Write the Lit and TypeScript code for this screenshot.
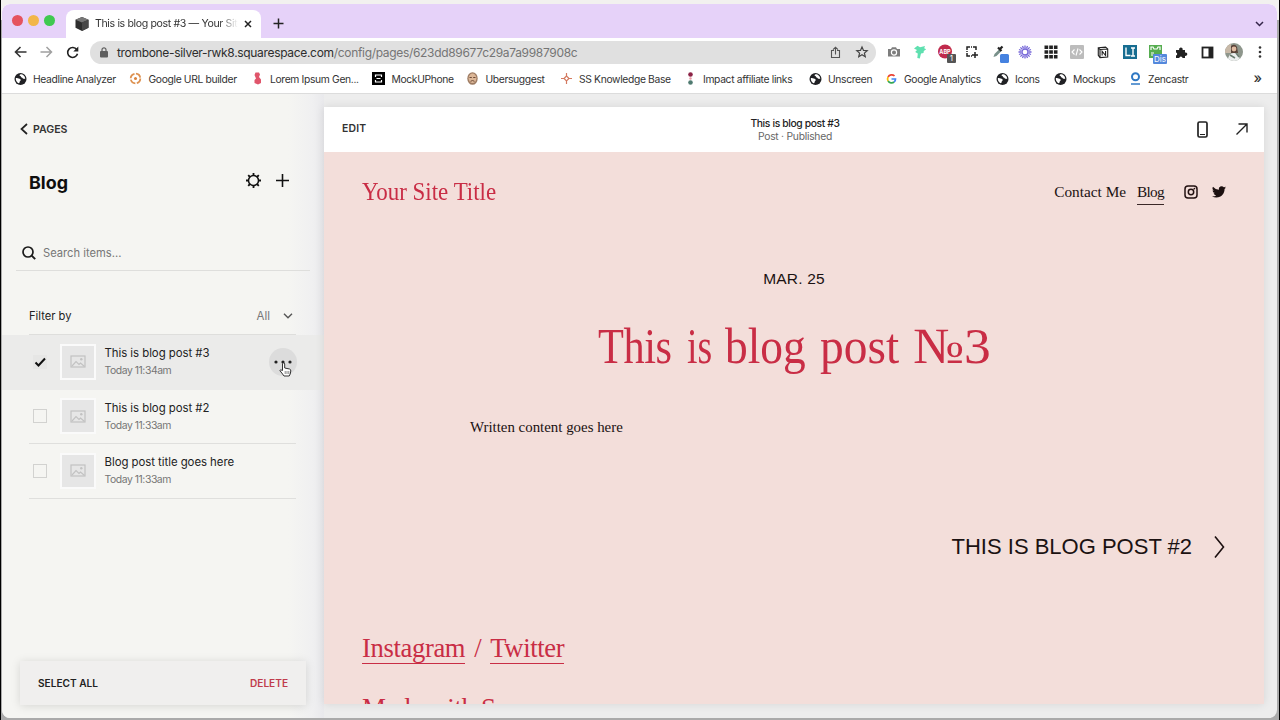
import { LitElement, html, css, svg } from "lit";
import { customElement } from "lit/decorators.js";

const icon = (w: number, h: number, vb: string, body: unknown) =>
  html`<svg width=${w} height=${h} viewBox=${vb} fill="none" stroke-linecap="butt">${body}</svg>`;

const globe = () => icon(12, 12, "0 0 12 12", svg`<circle cx="6" cy="6" r="6" fill="#202124"/><path d="M1.3 5.200C2.500 4.600 3.300 5.200 4.200 5.600c1.200.5 2 .5 2 1.500 0 .9-1 .9-1 1.700 0 .7-.4 1.400-1 1.500C2.300 9.500 1.200 7.500 1.300 5.200z M6 1.300c-1.200.4-1.200 1.500-.2 1.700.9.2.4 1.300 1.400 1.500.9.2.9.9 1.600 1.200.7.200 1.300 0 1.900.3C10.700 3.400 8.700 1.300 6 1.300z" fill="#fff"/>`);
const chevron = (w: number, h: number, d: string, color: string, sw = 1.6) =>
  icon(w, h, `0 0 ${w} ${h}`, svg`<path d=${d} stroke=${color} stroke-width=${sw}/>`);

const bookmarks = [
  { t: "Headline Analyzer", i: globe() },
  { t: "Google URL builder", i: icon(13, 13, "0 0 13 13", svg`<circle cx="6.500" cy="6.500" r="4.800" stroke="#dd9150" stroke-width="1.800" stroke-dasharray="6 1.500"/><circle cx="6.500" cy="6.500" r="1.500" fill="#d9813c"/>`) },
  { t: "Lorem Ipsum Gen...", i: icon(13, 13, "0 0 13 13", svg`<path d="M4.500.5h3.500l1 2-1 2.500 2 2.500v3.500l-3 1.500-3.500-1.500V8l1.500-1.500L3.500 3z" fill="#e0556b"/>`) },
  { t: "MockUPhone", i: icon(13, 13, "0 0 13 13", svg`<path d="M0 0h13v13H0z" fill="#000"/><path d="M3.500 5V3h6v2M3.500 8v2h6V8M4.500 6.500h4" stroke="#fff" stroke-width="1.200"/>`) },
  { t: "Ubersuggest", i: icon(13, 13, "0 0 13 13", svg`<ellipse cx="6.500" cy="6.500" rx="5.200" ry="6.300" fill="#9d7b62"/><ellipse cx="6.500" cy="6.300" rx="3.900" ry="4.800" fill="#dcb798"/><path d="M3.500 5.500h2.300M7.200 5.500h2.300M4.500 9.300q2-1.500 4 0" stroke="#6d4a36"/>`) },
  { t: "SS Knowledge Base", i: icon(13, 13, "0 0 13 13", svg`<path d="M6.500 1v3L9 6.500 6.500 9 4 6.500 6.500 4M6.500 9v3M1 6.500h3M9 6.500h3" stroke="#d47a60" stroke-width="1.200"/>`) },
  { t: "Impact affiliate links", i: icon(13, 13, "0 0 13 13", svg`<circle cx="6.500" cy="2.500" r="2.300" fill="#8c2346"/><circle cx="6.500" cy="6.500" r="1.200" fill="#e89aa5"/><circle cx="6.500" cy="10.500" r="2.300" fill="#4f7a70"/>`) },
  { t: "Unscreen", i: globe() },
  { t: "Google Analytics", i: icon(12, 12, "0 0 12 12", svg`<path d="M9 3A4 4 0 0 0 2.600 4" stroke="#ea4335" stroke-width="1.700"/><path d="M2.600 4a4 4 0 0 0 0 4" stroke="#fbbc05" stroke-width="1.700"/><path d="M2.600 8A4 4 0 0 0 8.600 9" stroke="#34a853" stroke-width="1.700"/><path d="M8.600 9A3.600 3.600 0 0 0 10 6H6" stroke="#4285f4" stroke-width="1.700"/>`) },
  { t: "Icons", i: globe() },
  { t: "Mockups", i: globe() },
  { t: "Zencastr", i: icon(13, 13, "0 0 13 13", svg`<circle cx="6.500" cy="4.800" r="3.500" stroke="#2f78c4" stroke-width="2"/><path d="M2 12h9" stroke="#2f78c4" stroke-width="1.600"/>`) },
];

const extensions = [
  icon(14, 14, "0 0 14 14", svg`<path d="M1 4h3l1-1.700h4L10 4h3v7.500H1z" fill="#7d7d7d"/><circle cx="7" cy="7.500" r="2.600" stroke="#fff" stroke-width="1.200"/>`),
  icon(14, 14, "0 0 14 14", svg`<path d="M1 3.500 4.500.8 7 2.300 12 1l-.8 2.200 2 1-2.400 1.800-.3 2-2.500.5L6.800 13.500 4.300 13 4.800 8.500 2.200 7 4 5z" fill="#5fe0b0"/>`),
  icon(18, 18, "0 0 18 18", svg`<circle cx="8" cy="8.500" r="7" fill="#c02a4c"/><text x="8" y="10.700" font-size="5.500" font-weight="700" text-anchor="middle" fill="#fff">ABP</text><rect x="10" y="11" width="9" height="9" rx="1" fill="#555"/><text x="14.500" y="18.300" font-size="8" text-anchor="middle" fill="#fff">1</text>`),
  icon(12, 12, "0 0 12 12", svg`<path d="M1 4V1h3M7 1h3v3M1 7v3h3M1 5v1M5 1h1M5 10h1M9 6v6M6 9h6" stroke="#222" stroke-width="1.500"/>`),
  icon(18, 18, "0 0 18 18", svg`<path d="m4.500 14 1-3L10 6.500l2 2L7.500 13z" fill="#78908a"/><path d="m9 4.500 3.500 3.500M10.500 6.500 13.500 3.500" stroke="#222" stroke-width="2.200"/><rect x="11" y="11" width="9" height="9" rx="1.500" fill="#4582e0"/>`),
  icon(14, 14, "0 0 14 14", svg`<g stroke="#7566d8" stroke-width="1.300"><circle cx="7" cy="7" r="3"/><path d="M7 .5v3M7 10.500v3M.5 7h3M10.500 7h3M2.400 2.400l2 2M9.600 9.600l2 2M2.400 11.600l2-2M9.600 4.400l2-2M4.500 1l1 2.500M9.500 1l-1 2.500M4.500 13l1-2.500M9.500 13l-1-2.500M1 4.500l2.500 1M1 9.500l2.500-1M13 4.500l-2.500 1M13 9.500l-2.500-1"/></g>`),
  icon(14, 14, "0 0 14 14", svg`<path d="M.5 2.300h13M.5 7h13M.5 11.700h13" stroke="#222" stroke-width="3.400" stroke-dasharray="3.700 1"/>`),
  icon(14, 14, "0 0 14 14", svg`<rect width="14" height="14" rx="1" fill="#bcbcbc"/><path d="M4.500 4.500 2 7l2.500 2.500M9.500 4.500 12 7 9.500 9.500M8 3.500 6 10.500" stroke="#fff" stroke-width="1.100"/>`),
  icon(12, 13, "0 0 14 14", svg`<path d="m1.500 1.500 8.500-.7 2.500 2v9.500l-9 .6-2-2.500zM1.500 1.500l2 2M3.500 3.500l9-.6M3.500 3.500v9.400" stroke="#222" stroke-width="1.300"/><path d="M6 10.500V5.500l4 5V5.300" stroke="#222" stroke-width="1.300"/>`),
  icon(14, 14, "0 0 14 14", svg`<rect width="14" height="14" fill="#176d91"/><path d="M3 2.500v8h4.500M8 3h4M10 3v8M8 11h4" stroke="#fff" stroke-width="1.400"/>`),
  icon(19, 18, "0 0 19 18", svg`<rect x="2" y="2" width="13" height="13" fill="#56ad50"/><path d="M4 7V4h2l1 2h3l1-2h2v3M4 10h3M4 12h2" stroke="#fff" stroke-width="1.200"/><rect x="6" y="11" width="14" height="10" rx="1" fill="#5488dc"/><text x="13" y="19" font-size="8" text-anchor="middle" fill="#fff">Dis</text>`),
  icon(13, 13, "0 0 13 13", svg`<path d="M0 4h3.200a1.800 1.800 0 1 1 3.400 0H9v2.600a1.700 1.700 0 1 1 0 3.200V12H6.500a1.600 1.600 0 0 0-3.200 0H0V9.500a1.600 1.600 0 0 0 0-3.100z" fill="#222"/>`),
  icon(13, 13, "0 0 13 13", svg`<rect x=".5" y="1.500" width="10" height="10" stroke="#222" stroke-width="1.800"/><path d="M6.500 1h4.500v11H6.500z" fill="#222"/>`),
  icon(18, 18, "0 0 18 18", svg`<defs><clipPath id="av"><circle cx="9" cy="9" r="9"/></clipPath></defs><g clip-path="url(#av)"><path d="M0 0h18v18H0z" fill="#8e968c"/><path d="M0 0h6v10H0z" fill="#c8b9a8"/><path d="M6 3q4-3 6 1l1 6H6z" fill="#594238"/><circle cx="9" cy="6" r="2.400" fill="#e0bba2"/><path d="M3 18q0-8 6-8 5 0 6 8z" fill="#eceeee"/><path d="m5 12 5 3M11 10l3 4" stroke="#6b7c70" stroke-width="1.500"/></g>`),
  icon(4, 14, "0 0 4 14", svg`<circle cx="2" cy="2.500" r="1.300" fill="#333"/><circle cx="2" cy="7" r="1.300" fill="#333"/><circle cx="2" cy="11.500" r="1.300" fill="#333"/>`),
];

const posts = [
  { title: "This is blog post #3", time: "Today 11:34am", on: true },
  { title: "This is blog post #2", time: "Today 11:33am", on: false },
  { title: "Blog post title goes here", time: "Today 11:33am", on: false },
];

@customElement("browser-chrome")
class BrowserChrome extends LitElement {
  static styles = css`
    :host { display: block; height: 90px; background: #fff; color: #333; font-family: Inter, sans-serif; border-bottom: 1px solid #dcdcdc; box-sizing: border-box; }
    svg { display: block; overflow: visible; flex: none; }
    .tabs { height: 34px; background: #e6d2f9; display: flex; box-sizing: border-box; padding: 6px 13px 0 10px; border-radius: 8px 8px 0 0; }
    .lights { display: flex; gap: 5px; padding-top: 5px; width: 54px; }
    .dot { width: 11px; height: 11px; border-radius: 50%; }
    .red { background: #e5535f; } .amber { background: #f2b649; } .green { background: #3fc950; }
    .tab { width: 195px; box-sizing: border-box; background: #fff; border-radius: 8px 8px 0 0; display: flex; align-items: center; padding: 0 9px; }
    .title { font-size: 10.6px; margin-left: 6px; width: 143px; overflow: hidden; white-space: nowrap; line-height: 16px; letter-spacing: -.37px; -webkit-mask-image: linear-gradient(90deg, #000 124px, transparent 143px); margin-right: 6px; }
    .new { padding: 8px 0 0 12px; flex: 1; }
    .caret { padding-top: 11px; }
    .bar { display: flex; height: 28px; align-items: center; padding-left: 12px; box-sizing: border-box; }
    .nav { display: flex; width: 76px; gap: 13px; align-items: center; }
    .url { width: 786px; height: 23px; border-radius: 12px; background: #e0e0e0; display: flex; align-items: center; box-sizing: border-box; padding: 0 8px 0 7px; }
    .addr { flex: 1; font-size: 12px; color: #757575; margin-left: 7px; white-space: nowrap; letter-spacing: -.32px; }
    .host { color: #2d2d2d; }
    .acts { display: flex; gap: 15px; align-items: center; }
    .exts { display: grid; grid-template-columns: 26px 26px 26px 25px 28px 26px 26px 26px 26px 27px 27px 25px 26px 26px 26px; padding-left: 5px; align-items: center; justify-items: center; }
    .marks { display: grid; height: 24px; align-items: center; padding-left: 11.500px; grid-template-columns: 115.500px 121.500px 121.500px 94px 93.500px 124px 125px 76px 111px 58px 75px 125px 10px; }
    .mark { display: flex; gap: 6.500px; font-size: 10.3px; letter-spacing: -.34px; align-items: center; white-space: nowrap; line-height: 16px; padding-top: 1px; }
    .mark svg { width: 13px; }
    .more { font-size: 14px; line-height: 14px; font-weight: 500; }
  `;
  render() {
    return html`
      <div class="tabs">
        <div class="lights"><i class="dot red"></i><i class="dot amber"></i><i class="dot green"></i></div>
        <div class="tab">
          ${icon(14, 14, "0 0 14 14", svg`<path d="m7 0 6.500 2.800v8L7 14 .5 10.800v-8z" fill="#2e2e2e"/><path d="m7 0 6.500 2.800L7 5.500.5 2.800z" fill="#777"/><path d="M7 5.500v8.500l6.500-3.200v-8z" fill="#484848"/>`)}
          <span class="title">This is blog post #3 — Your Site</span>
          ${icon(8, 8, "0 0 8 8", svg`<path d="m1 1 6 6M7 1 1 7" stroke="#222" stroke-width="1.500"/>`)}
        </div>
        <div class="new">${icon(11, 11, "0 0 11 11", svg`<path d="M5.500.5v10M.5 5.500h10" stroke="#222" stroke-width="1.500"/>`)}</div>
        <div class="caret">${chevron(9, 6, "M1 1 4.500 4.500 8 1", "#35264a", 1.500)}</div>
      </div>
      <div class="bar">
        <div class="nav">
          ${icon(13, 12, "0 0 13 12", svg`<path d="M12.500 6H1.800M6.500 1 1.500 6l5 5" stroke="#333" stroke-width="1.600"/>`)}
          ${icon(13, 12, "0 0 13 12", svg`<path d="M.5 6h10.700M6.500 1l5 5-5 5" stroke="#a0a0a0" stroke-width="1.500"/>`)}
          ${icon(13, 13, "0 0 13 13", svg`<path d="M10.800 3.600A5 5 0 1 0 11.500 7.800" stroke="#222" stroke-width="1.600"/><path d="M12.300.5v5h-5z" fill="#222"/>`)}
        </div>
        <div class="url">
          ${icon(13, 11, "-2 0 13 11", svg`<rect x="1" y="4" width="8" height="6.500" rx="1" fill="#5f5f5f"/><path d="M3 4.500V2.800a2 2 0 0 1 4 0v1.700" stroke="#5f5f5f" stroke-width="1.200"/>`)}
          <span class="addr"><span class="host">trombone-silver-rwk8.squarespace.com</span>/config/pages/623dd89677c29a7a9987908c</span>
          <div class="acts">
            ${icon(11, 13, "0 0 11 13", svg`<path d="M4 4.500H1.500v7h8v-7H7M5.500 8.500V1.500M3 3.700l2.500-2.500L8 3.700" stroke="#555" stroke-width="1.100"/>`)}
            ${icon(12, 12, "0 0 12 12", svg`<path d="m6 1 1.500 3.400 3.700.3-2.800 2.400.9 3.600L6 8.800l-3.300 1.900.9-3.600L.8 4.700l3.700-.3z" stroke="#444" stroke-width="1.200"/>`)}
          </div>
        </div>
        <div class="exts">${extensions}</div>
      </div>
      <div class="marks">
        ${bookmarks.map((b) => html`<div class="mark">${b.i}<span>${b.t}</span></div>`)}
        <span class="more">»</span>
      </div>`;
  }
}

@customElement("blog-panel")
class BlogPanel extends LitElement {
  static styles = css`
    :host { display: flex; flex-direction: column; width: 322px; box-sizing: border-box; font-family: Inter, sans-serif; color: #222; background: linear-gradient(90deg, #f5f5f2 0, #f5f5f2 286px, #f0f0f1 310px, #e9e9ec 322px); }
    svg { display: block; flex: none; overflow: visible; }
    .back { height: 70px; display: flex; align-items: center; gap: 5px; padding-left: 18px; font-size: 10.6px; font-weight: 600; color: #333; }
    .head { height: 36px; display: flex; align-items: center; padding: 0 35px 0 27px; gap: 15px; }
    .head svg { margin-bottom: 4px; }
    .name { flex: 1; font-size: 17.9px; font-weight: 700; color: #0e0e0e; }
    .search { margin: 34px 14px 0 14px; height: 37px; box-sizing: border-box; border-bottom: 1px solid #dededc; display: flex; align-items: center; gap: 7px; padding: 1px 0 0 6px; font-size: 11.2px; color: #777; }
    .filter { margin: 27px 28px 0 27px; height: 37px; box-sizing: border-box; border-bottom: 1px solid #dededc; display: flex; align-items: center; font-size: 11.2px; padding: 0 3px 0 0; }
    .by { flex: 1; }
    .all { color: #777; margin-right: 13px; font-size: 11.500px; }
    .row { height: 54.500px; display: flex; padding-left: 27px; }
    .on { background: #ebebea; }
    .inner { width: 267px; display: flex; align-items: center; border-bottom: 1px solid #dfdfdd; box-sizing: border-box; }
    .on .inner { border-color: transparent; }
    .check { width: 14px; height: 14px; box-sizing: border-box; border: 1px solid #d2d2d0; margin: 0 13px 0 4px; }
    .on .check { border: 0; background: #e6e6e5; }
    .thumb { width: 36px; height: 36px; box-sizing: border-box; border: 2px solid #fafafa; background: #e6e6e6; display: grid; place-items: center; margin-right: 8.500px; }
    .txt { flex: 1; }
    .pt { font-size: 11.4px; line-height: 18px; white-space: nowrap; letter-spacing: -.04px; }
    .time { font-size: 10.4px; line-height: 17px; color: #757575; letter-spacing: -.44px; }
    .dots { width: 28px; height: 28px; border-radius: 50%; background: #dcdcdc; display: grid; place-items: center; position: relative; margin-right: -1px; }
    .hand { position: absolute; left: 10px; top: 14px; }
    .foot { margin: auto 18px 13px 18px; height: 44px; background: #f0efee; box-shadow: 0 1px 9px rgba(0,0,0,.13); display: flex; justify-content: space-between; align-items: center; padding: 0 18px 1px; box-sizing: border-box; font-size: 10.1px; font-weight: 600; }
    .del { color: #c03c4b; }
  `;
  render() {
    return html`
      <div class="back">${chevron(8, 12, "M7 1 1.500 6 7 11", "#222", 1.700)}<span>PAGES</span></div>
      <div class="head"><span class="name">Blog</span>
        ${icon(15, 15, "0 0 15 15", svg`<circle cx="7.500" cy="7.500" r="5" stroke="#111" stroke-width="1.500"/><path d="M7.500 0v2.500M7.500 12.500V15M0 7.500h2.500M12.500 7.500H15M2.200 2.200 4 4M11 11l1.800 1.800M2.200 12.800 4 11M11 4l1.800-1.800" stroke="#111" stroke-width="1.800"/>`)}
        ${icon(13, 13, "0 0 13 13", svg`<path d="M6.500 0v13M0 6.500h13" stroke="#111" stroke-width="1.600"/>`)}
      </div>
      <div class="search">${icon(14, 14, "0 0 14 14", svg`<circle cx="6" cy="6" r="5" stroke="#1b1b1b" stroke-width="1.700"/><path d="m9.700 9.700 3.500 3.500" stroke="#1b1b1b" stroke-width="1.900"/>`)}<span>Search items...</span></div>
      <div class="filter"><span class="by">Filter by</span><span class="all">All</span>${chevron(10, 6, "M1 .7 5 4.700 9 .7", "#555", 1.400)}</div>
      ${posts.map((p) => html`
        <div class="row ${p.on ? "on" : ""}"><div class="inner">
          <div class="check">${p.on ? icon(14, 14, "0 0 14 14", svg`<path d="m2.500 7.500 3 3L12 3.500" stroke="#111" stroke-width="2"/>`) : ""}</div>
          <div class="thumb">${icon(16, 13, "0 0 16 13", svg`<rect x="1" y="1" width="14" height="11" stroke="#c2c2c2" stroke-width="1.200"/><path d="m2 11 4-4.500 3 3 1.500-1.500 4 3.500" stroke="#c2c2c2" stroke-width="1.200"/><circle cx="11.300" cy="4.200" r="1.200" fill="#c2c2c2"/>`)}</div>
          <div class="txt"><div class="pt">${p.title}</div><div class="time">${p.time}</div></div>
          ${p.on ? html`<div class="dots">
            ${icon(18, 4, "0 0 18 4", svg`<circle cx="2" cy="2" r="1.600" fill="#222"/><circle cx="9" cy="2" r="1.600" fill="#222"/><circle cx="16" cy="2" r="1.600" fill="#222"/>`)}
            <span class="hand">${icon(13, 15, "0 0 13 15", svg`<path d="M3.500 8.500V2a1.100 1.100 0 0 1 2.200 0v4l4.800 1q1.500.4 1.300 2l-.6 3-1 2H5L2.800 11 .8 8.500q.8-1.300 2.700 0z" fill="#fff" stroke="#333" stroke-width="1"/><path d="M6.200 9v3M8 9v3M9.800 9v3" stroke="#555" stroke-width=".7"/>`)}</span>
          </div>` : ""}
        </div></div>`)}
      <div class="foot"><span>SELECT ALL</span><span class="del">DELETE</span></div>`;
  }
}

@customElement("site-preview")
class SitePreview extends LitElement {
  static styles = css`
    :host { display: flex; flex-direction: column; width: 940px; height: 597px; overflow: hidden; background: #f3deda; box-shadow: 0 0 9px rgba(0,0,0,.1); color: #1b1212; font-family: "Liberation Serif", serif; }
    svg { display: block; flex: none; overflow: visible; }
    .top { height: 44.500px; flex: none; background: #fff; display: grid; grid-template-columns: 1fr auto 1fr; align-items: center; padding: 0 16px 0 18px; font-family: Inter, sans-serif; }
    .edit { font-size: 10.4px; font-weight: 600; color: #333; letter-spacing: .2px; padding-bottom: 1px; }
    .mid { text-align: center; font-size: 10.3px; line-height: 13px; color: #666; letter-spacing: -.25px; padding-top: 1px; }
    .strong { color: #222; font-weight: 500; letter-spacing: -.36px; }
    .tools { display: flex; justify-content: flex-end; align-items: center; gap: 28px; }
    .site { display: flex; height: 80px; flex: none; align-items: center; padding: 0 38px; }
    .logo { flex: 1; }
    .red { color: #c92d45; white-space: nowrap; }
    .logo span { display: inline-block; font-size: 25.500px; line-height: 30px; transform: scaleX(.9); transform-origin: 0 50%; }
    .menu { display: flex; font-size: 15.300px; line-height: 24px; gap: 11px; margin-right: 20px; padding-top: 1px; }
    .cur { border-bottom: 1px solid #3a2828; letter-spacing: -.7px; }
    .soc { display: flex; gap: 14px; align-items: center; padding-top: 1px; }
    .date { text-align: center; font: 15.500px/20px "Liberation Sans", sans-serif; padding-top: 37px; letter-spacing: .2px; }
    .title { display: flex; justify-content: space-between; width: 393px; margin: 26px 0 0 274px; font-size: 51px; line-height: 62px; }
    .title span { display: block; transform-origin: 0 50%; }
    .w0 { width: 74px; transform: scaleX(.83); letter-spacing: -.5px; }
    .w1 { width: 23px; transform: scaleX(.74); }
    .w2 { width: 80px; transform: scaleX(.89); }
    .w3 { width: 78px; transform: scaleX(.93); }
    .w4 { width: 78px; transform: scaleX(1.05); }
    .body { font-size: 14.900px; line-height: 20px; padding: 40px 0 0 146px; }
    .next { display: flex; justify-content: flex-end; align-items: center; gap: 22px; padding: 95px 39px 0 0; font: 22px/30px "Liberation Sans", sans-serif; }
    .links { font-size: 26.600px; letter-spacing: -.35px; padding: 71px 0 0 38px; display: flex; line-height: 31px; }
    .links span { display: inline-block; }
    .ln { border-bottom: 1px solid #c92d45; height: 30px; }
    .links .slash { padding: 0 9px; }
    .made { font-size: 27px; letter-spacing: -.4px; line-height: 32px; padding: 28.500px 0 0 38px; height: 32px; flex: none; }
  `;
  render() {
    return html`
      <div class="top"><span class="edit">EDIT</span>
        <div class="mid"><div class="strong">This is blog post #3</div><div>Post · Published</div></div>
        <div class="tools">
          ${icon(11, 17, "0 0 11 17", svg`<rect x="1" y="1" width="9" height="15" rx="1.500" stroke="#222" stroke-width="1.700"/><path d="M3 13.500h5" stroke="#222" stroke-width="1.200"/>`)}
          ${icon(12, 12, "0 0 12 12", svg`<path d="M.5 11.500 11 1M2.500 1H11v8.500" stroke="#222" stroke-width="1.400"/>`)}
        </div>
      </div>
      <div class="site"><div class="logo red"><span>Your Site Title</span></div>
        <div class="menu"><span>Contact Me</span><span class="cur">Blog</span></div>
        <div class="soc">
          ${icon(14, 14, "0 0 14 14", svg`<rect x="1" y="1" width="12" height="12" rx="3" stroke="#211" stroke-width="1.500"/><circle cx="7" cy="7" r="2.700" stroke="#211" stroke-width="1.500"/><circle cx="10.400" cy="3.600" r=".9" fill="#211"/>`)}
          ${icon(14, 12, "0 0 24 20", svg`<path d="M24 2.400a10 10 0 0 1-2.800.8A5 5 0 0 0 23.300.5a10 10 0 0 1-3.100 1.200 4.900 4.900 0 0 0-8.400 4.500A14 14 0 0 1 1.700 1a4.900 4.900 0 0 0 1.500 6.600 5 5 0 0 1-2.200-.6 4.900 4.900 0 0 0 3.900 4.900 5 5 0 0 1-2.200.1 4.900 4.900 0 0 0 4.600 3.400A10 10 0 0 1 0 17.400 14 14 0 0 0 7.500 19.600c9.200 0 14.300-7.700 14-14.600A10 10 0 0 0 24 2.400z" fill="#1c1010"/>`)}
        </div>
      </div>
      <div class="date">MAR. 25</div>
      <div class="title red"><span class="w0">This</span> <span class="w1">is</span> <span class="w2">blog</span> <span class="w3">post</span> <span class="w4">№3</span></div>
      <div class="body">Written content goes here</div>
      <div class="next"><span>THIS IS BLOG POST #2</span>${chevron(11, 22, "M1 .5 9.500 11 1 21.500", "#1c1010", 1.600)}</div>
      <div class="links red"><span class="ln">Instagram</span><span class="slash">/</span><span class="ln">Twitter</span></div>
      <div class="made red">Made with Squarespace</div>`;
  }
}

@customElement("app-root")
class AppRoot extends LitElement {
  static styles = css`
    :host { display: block; width: 1280px; height: 720px; box-sizing: border-box; overflow: hidden; background: linear-gradient(#f2f1ef 0 20px, #aaa 20px); padding: 4px 2px 2px 1px; border-left: 1px solid #000; border-right: 1px solid #000; }
    .win { height: 714px; background: #ededed; border-radius: 8px; overflow: hidden; display: flex; flex-direction: column; }
    .main { display: flex; flex: 1; }
    .stage { padding: 13px 0 0 0; }
  `;
  render() {
    return html`<div class="win"><browser-chrome></browser-chrome>
      <div class="main"><blog-panel></blog-panel><div class="stage"><site-preview></site-preview></div></div></div>`;
  }
}
